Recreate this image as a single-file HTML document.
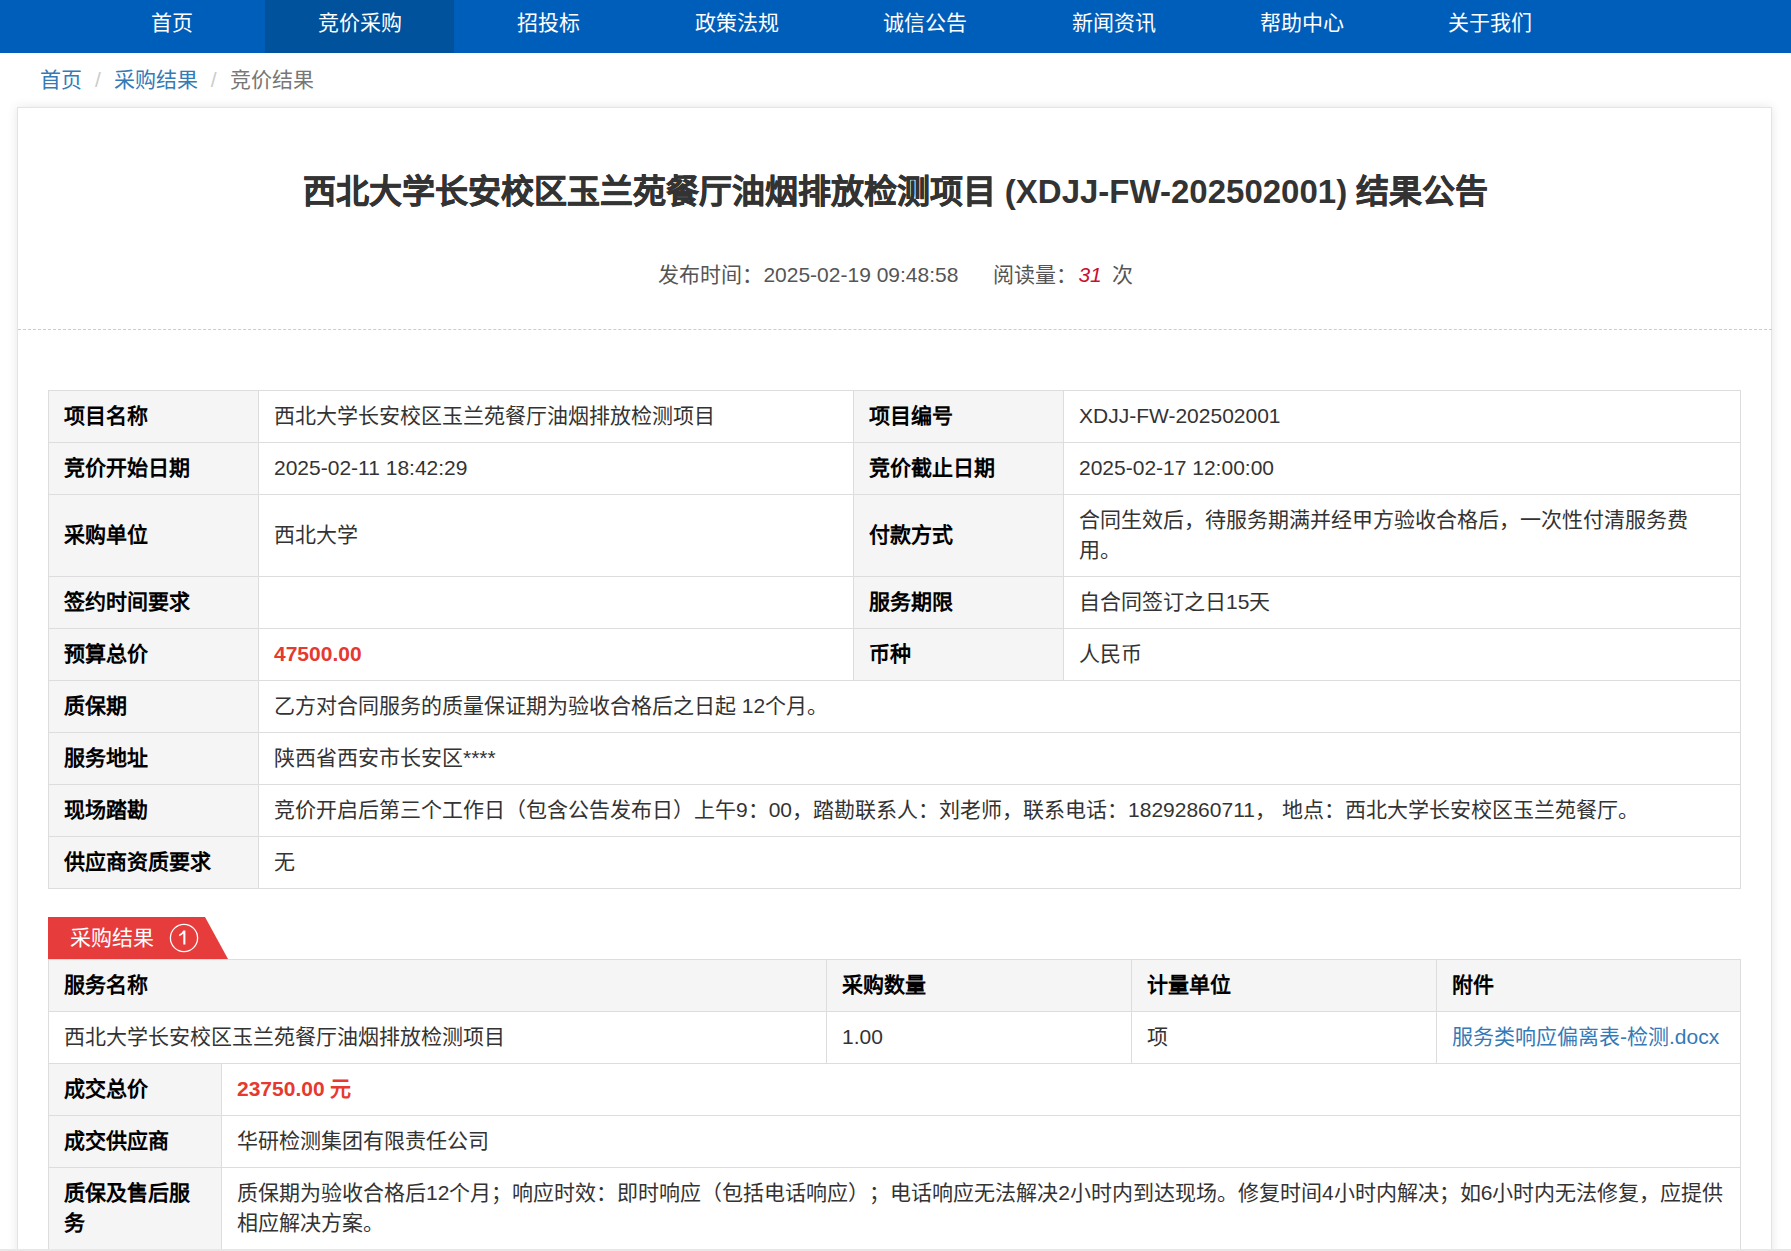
<!DOCTYPE html>
<html lang="zh-CN"><head><meta charset="utf-8">
<style>
*{box-sizing:border-box;margin:0;padding:0}
html,body{text-spacing-trim:space-all;width:1791px;height:1251px;overflow:hidden;background:#fff;font-family:"Liberation Sans",sans-serif;color:#333}
.nav{position:absolute;left:0;top:0;width:1791px;height:53px;background:#005ebb}
.nav a{position:absolute;top:0;height:53px;width:189px;text-align:center;color:#fff;font-size:21px;line-height:45px;text-decoration:none}
.nav a.on{background:#00529c}
.bc{position:absolute;left:40px;top:65px;font-size:21px;line-height:30px;color:#777;white-space:nowrap}
.bc a{color:#337ab7;text-decoration:none}
.bc .sep{color:#ccc;padding:0 13px}
.card{position:absolute;left:17px;top:107px;width:1755px;height:1200px;background:#fff;border:1px solid #e4e4e4;box-shadow:0 0 10px rgba(0,0,0,.1)}
.title .c{-webkit-text-stroke:0.5px #333}
.title{position:absolute;left:0;top:167px;width:1791px;text-align:center;font-size:33px;font-weight:bold;color:#333;line-height:50px;white-space:nowrap}
.meta{position:absolute;left:0;top:260px;width:1791px;text-align:center;font-size:21px;color:#555;line-height:30px;white-space:nowrap}
.meta i{color:#c8102e}
.dash{position:absolute;left:18px;top:329px;width:1754px;height:0;border-top:1px dashed #ccc}
table{position:absolute;border-collapse:collapse;table-layout:fixed;font-size:21px;color:#333}
td,th{border:1px solid #ddd;padding:0 15px 2px;line-height:30px;text-align:left;vertical-align:middle;font-weight:normal}
.l{background:#f5f5f5;font-weight:bold;color:#000}
.red{color:#e6392f;font-weight:bold}
.tab{position:absolute;left:48px;top:917px;width:181px;height:42px}
.tab span{position:absolute;left:22px;top:6px;font-size:21px;color:#fff;line-height:30px}
.tab b{position:absolute;left:170px;top:924px}
a.lk{color:#337ab7;text-decoration:none}
.sb{position:absolute;left:0;top:1249px;width:1791px;height:2px;background:#e7e7e7}
</style></head><body>
<div class="nav">
<a style="left:77px">首页</a>
<a class="on" style="left:265px">竞价采购</a>
<a style="left:454px">招投标</a>
<a style="left:642px">政策法规</a>
<a style="left:830px">诚信公告</a>
<a style="left:1019px">新闻资讯</a>
<a style="left:1207px">帮助中心</a>
<a style="left:1395px">关于我们</a>
</div>
<div class="bc"><a>首页</a><span class="sep">/</span><a>采购结果</a><span class="sep">/</span>竞价结果</div>
<div class="card"></div>
<div class="title"><span class="c">西北大学长安校区玉兰苑餐厅油烟排放检测项目</span> (XDJJ-FW-202502001) <span class="c">结果公告</span></div>
<div class="meta">发布时间：2025-02-19 09:48:58 &nbsp; &nbsp; &nbsp;阅读量：<i style="margin:0 4px 0 1px">31</i> 次</div>
<div class="dash"></div>

<table style="left:48px;top:390px;width:1692px">
<colgroup><col style="width:210px"><col style="width:595px"><col style="width:210px"><col style="width:677px"></colgroup>
<tr style="height:52px"><td class="l">项目名称</td><td>西北大学长安校区玉兰苑餐厅油烟排放检测项目</td><td class="l">项目编号</td><td>XDJJ-FW-202502001</td></tr>
<tr style="height:52px"><td class="l">竞价开始日期</td><td>2025-02-11 18:42:29</td><td class="l">竞价截止日期</td><td>2025-02-17 12:00:00</td></tr>
<tr style="height:82px"><td class="l">采购单位</td><td>西北大学</td><td class="l">付款方式</td><td>合同生效后，待服务期满并经甲方验收合格后，一次性付清服务费用。</td></tr>
<tr style="height:52px"><td class="l">签约时间要求</td><td></td><td class="l">服务期限</td><td>自合同签订之日15天</td></tr>
<tr style="height:52px"><td class="l">预算总价</td><td class="red">47500.00</td><td class="l">币种</td><td>人民币</td></tr>
<tr style="height:52px"><td class="l">质保期</td><td colspan="3">乙方对合同服务的质量保证期为验收合格后之日起 12个月。</td></tr>
<tr style="height:52px"><td class="l">服务地址</td><td colspan="3">陕西省西安市长安区****</td></tr>
<tr style="height:52px"><td class="l">现场踏勘</td><td colspan="3">竞价开启后第三个工作日（包含公告发布日）上午9：00，踏勘联系人：刘老师，联系电话：18292860711， 地点：西北大学长安校区玉兰苑餐厅。</td></tr>
<tr style="height:52px"><td class="l">供应商资质要求</td><td colspan="3">无</td></tr>
</table>

<svg class="tab" viewBox="0 0 181 42" width="181" height="42" style="position:absolute;left:48px;top:917px">
<polygon points="0,0 157,0 180,42 0,42" fill="#e63c3c"/>
<circle cx="136" cy="21" r="13.6" fill="none" stroke="#fff" stroke-width="1.3"/>
<path d="M135.3 13.6 L137.4 13.6 L137.4 27.6 L135.3 27.6 L135.3 16.6 Q134 18.2 131.2 19.3 L131.2 17.4 Q134.2 16 135.3 13.6 Z" fill="#fff"/>
</svg>
<div style="position:absolute;left:70px;top:923px;font-size:21px;line-height:30px;color:#fff">采购结果</div>

<table style="left:48px;top:959px;width:1692px">
<colgroup><col style="width:778px"><col style="width:305px"><col style="width:305px"><col style="width:304px"></colgroup>
<tr style="height:52px"><td class="l">服务名称</td><td class="l">采购数量</td><td class="l">计量单位</td><td class="l">附件</td></tr>
<tr style="height:52px"><td>西北大学长安校区玉兰苑餐厅油烟排放检测项目</td><td>1.00</td><td>项</td><td><a class="lk">服务类响应偏离表-检测.docx</a></td></tr>
</table>
<table style="left:48px;top:1063px;width:1692px">
<colgroup><col style="width:173px"><col style="width:1519px"></colgroup>
<tr style="height:52px"><td class="l">成交总价</td><td class="red">23750.00 元</td></tr>
<tr style="height:52px"><td class="l">成交供应商</td><td>华研检测集团有限责任公司</td></tr>
<tr style="height:90px"><td class="l" style="vertical-align:top;padding-top:10px">质保及售后服务</td><td style="vertical-align:top;padding-top:10px">质保期为验收合格后12个月；响应时效：即时响应（包括电话响应）；电话响应无法解决2小时内到达现场。修复时间4小时内解决；如6小时内无法修复，应提供相应解决方案。</td></tr>
</table>
<div class="sb"></div>
</body></html>
